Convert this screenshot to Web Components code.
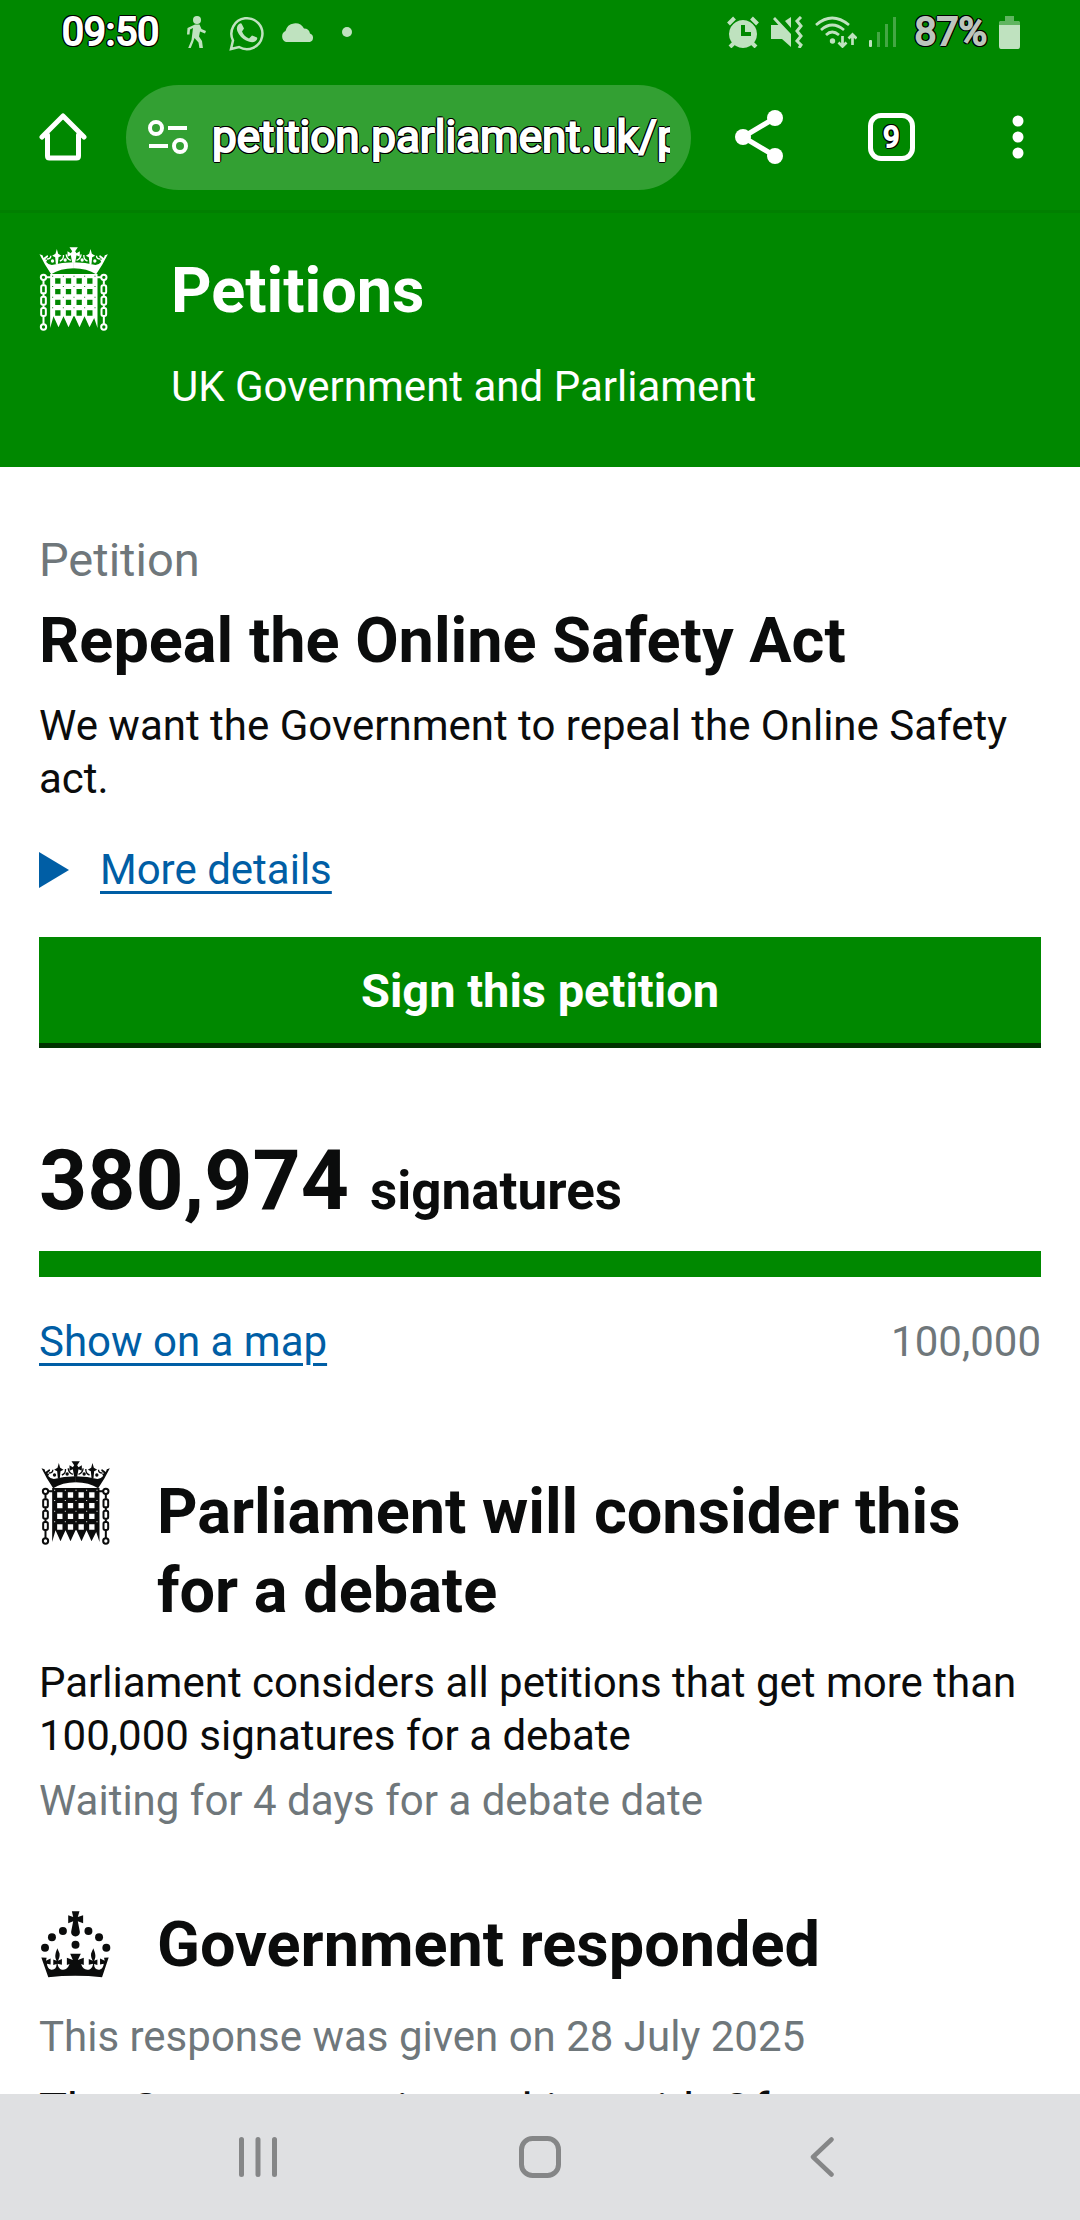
<!DOCTYPE html>
<html lang="en">
<head>
<meta charset="utf-8">
<meta name="viewport" content="width=device-width, initial-scale=1">
<title>Repeal the Online Safety Act - Petitions</title>
<style>
  html, body {
    margin: 0;
    height: 100%;
  }

  body {
    --green: #008800;
    --dark-green: #003300;
    --text: #0b0c0c;
    --grey: #6f777b;
    --link: #005ea5;
    --gutter: 39px;
    --outline: -2px 0 black, 2px 0 black, 0 -2px black, 0 2px black,
      -1px -2px black, 1px -2px black, -1px 2px black, 1px 2px black,
      -2px -1px black, 2px -1px black, -2px 1px black, 2px 1px black;

    display: flex;
    flex-direction: column;
    overflow: hidden;
    background: white;
    color: var(--text);
    font-family: Roboto, "Liberation Sans", sans-serif;
    font-size: 42px;
    line-height: 53px;
  }

  petition-page {
    flex: 1;
    min-height: 0;
  }
</style>
</head>
<body>

<status-bar time="09:50" battery="87%"></status-bar>
<browser-toolbar url="petition.parliament.uk/p" tabs="9"></browser-toolbar>

<petition-page>
  <site-header slot="header">
    Petitions
    <span slot="tagline">UK Government and Parliament</span>
  </site-header>

  <petition-summary>
    <span slot="title">Repeal the Online Safety Act</span>
    We want the Government to repeal the Online Safety act.
  </petition-summary>

  <signature-count count="380974" target="100000"></signature-count>

  <petition-section icon="portcullis">
    <span slot="title">Parliament will consider this for a debate</span>
    <section-text>Parliament considers all petitions that get more than 100,000 signatures for a debate</section-text>
    <section-text meta>Waiting for 4 days for a debate date</section-text>
  </petition-section>

  <petition-section icon="crown" loose>
    <span slot="title">Government responded</span>
    <section-text meta>This response was given on 28 July 2025</section-text>
    <section-text intro>The Government is working with Ofcom</section-text>
  </petition-section>
</petition-page>

<system-nav></system-nav>

<script>
/*
*   Icons
*/

const chain = `
  <circle cx="78" cy="153" r="8"/>
  <path d="M78 161v14M78 203v6M78 237v6M78 271v22"/>
  <rect x="71" y="177" width="14" height="24" rx="5"/>
  <rect x="71" y="211" width="14" height="24" rx="5"/>
  <rect x="71" y="245" width="14" height="24" rx="5"/>
  <circle cx="78" cy="302" r="8"/>
`;

function portcullisHoles () {
  let d = '';
  for (let y of [156, 188, 220, 252]) {
    for (let x of [113, 145, 177, 209]) {
      d += `M${x} ${y}v16h16v-16z`;
    }
  }
  for (let y of [148, 179, 211, 243]) {
    for (let x of [104, 136, 168, 200, 231]) {
      d += `M${x} ${y}v3h3v-3z`;
    }
  }
  return d;
}

const halfCrown = `
  <path d="M66 84l9 3 3 8 12-9 2 5-9 8 6 2-3 6q6 8 17 9Q132 109 169 108V126Q128 126 101 144L82 114z"/>
  <path d="M118 68l4 14 10 6-9 5-2 20h-6l-2-20-9-5 10-6z"/>
  <path fill="none" stroke="currentColor" stroke-width="4" d="M88 98q12 0 12-10M127 104q12-4 11-18M146 84q2 14 14 18"/>
  <circle cx="105" cy="104" r="5"/>
  <circle cx="143" cy="101" r="5"/>
`;

const icons = {
  portcullis: ['65 62 206 252', `
    <g>${halfCrown}</g>
    <g transform="matrix(-1 0 0 1 337 0)">${halfCrown}</g>
    <path d="M156 63h25l-8 12 4 6 10-6v16l-10-4-4 22h-9l-4-22-10 4v-16l10 6 4-6z"/>
    <path fill-rule="evenodd" d="M98 143h142v162l-10-30-14 28-15-33-15 33-15-33h-3l-15 33-15-33-15 33-15-33-10 35z${portcullisHoles()}"/>
    <g fill="none" stroke="currentColor" stroke-width="6">${chain}
      <g transform="matrix(-1 0 0 1 337 0)">${chain}</g>
      <path d="M86 153h14M237 153h14"/>
    </g>`],
  crown: ['58 58 210 202', `
    <path d="M152 59h23l-5 17 16-5v24l-16-6 6 31c1 8-5 15-13 15s-14-7-13-15l6-31-15 6V71l15 5z"/>
    <circle cx="163" cy="160" r="12"/>
    <circle cx="125" cy="118" r="12"/><circle cx="202" cy="118" r="12"/>
    <circle cx="92" cy="137" r="12"/><circle cx="234" cy="137" r="12"/>
    <circle cx="71" cy="169" r="12"/><circle cx="256" cy="169" r="12"/>
    <path d="M60 198l16 1-2 9 14-7v18l-11-2c1 12 8 18 15 18 9 0 14-6 14-17l-10 3v-17l10 4c-4-8-5-14-3-22 1-6 4-11 5-16 2 5 5 10 7 16 1 8-1 14-5 22l12-5v17l-13-3c2 13 8 18 17 18s15-6 19-17l-8 3v-22l18 7-8-19h32l-9 19 18-7v22l-8-3c3 11 10 17 19 17s15-5 17-18l-13 3v-17l12 5c-4-8-6-14-5-22 2-6 5-11 7-16 1 5 4 10 5 16 2 8 1 14-3 22l10-4v17l-10-3c0 11 5 17 14 17 7 0 14-6 15-18l-11 2v-18l14 7-2-9 14-1-20 60q-81-9-162 0z"/>`],
  walk: ['0 0 20 32', `
    <circle cx="10" cy="4" r="4"/>
    <path d="M8 8.500h4.500l2 4.500 4.500 2-1 2.500-5-2-1 5 3 4.500 1 7.500h-3.500l-1-6-4-4.500-1.500 4.500-2.500 6H1l3.500-8.500L6 12l-3 1.500-.5 5H0L.5 12z"/>`],
  whatsapp: ['0 0 35 37', `
    <path fill="none" stroke="currentColor" stroke-width="2.500" d="M2 35l2-8.500A15.500 15.500 0 1 1 10 33z"/>
    <path d="M9 11q3-3 4-.5l2 4-2 3q2 5 7 7l3-3 5 2q1 2-2 4-3 2-9-1-6-3-8.500-9Q7 14 9 11z"/>`],
  cloud: ['0 0 34 20', '<path d="M6 20a6 6 0 0 1-.5-11A10 10 0 0 1 24 6.500q5 0 6 5A4.500 4.500 0 0 1 30 20z"/>'],
  dot: ['0 0 10 10', '<circle cx="5" cy="5" r="5"/>'],
  alarm: ['0 0 32 32', `
    <path fill-rule="evenodd" d="M16 4a14 14 0 1 0 .01 0zM14 9h4v7h6v4H14z"/>
    <path fill="none" stroke="currentColor" stroke-width="4" d="M1.500 8l6-6M30.500 8l-6-6M3 31l5-5M29 31l-5-5"/>`],
  mute: ['0 0 32 32', `
    <path d="M14 5l6-4v11zM2 3l2-2 16 17v5zM0 9h10l10 9v13l-9-8H0z"/>
    <path fill="none" stroke="currentColor" stroke-width="3" d="M30 1l-4 4 4 5-4 5 4 5-4 5 4 4-2 3"/>`],
  wifi: ['0 0 42 32', `
    <g fill="none" stroke="currentColor" stroke-width="2.700">
      <path d="M1 9q16-14 33 0M6 14q11-10 23 0M11 19q6-6 13 0"/>
      <path d="M27.500 20v10M23.500 26.500l4 4 4-4M37.500 29V19M33.500 22.500l4-4 4 4"/>
    </g>
    <circle cx="17.500" cy="25" r="2.700"/>`],
  signal: ['0 0 28 32', `
    <rect x="0" y="24" width="3" height="7" rx="1"/>
    <path fill-opacity=".35" d="M8 16h3v15H8zM16 8h3v23h-3zM24 1h3v30h-3z"/>`],
  battery: ['0 0 21 33', `
    <path fill-opacity=".5" d="M6 0h9v5h5l1 1v3H0V6l1-1h5z"/>
    <path d="M0 9h21v21q0 3-2 3H2q-2 0-2-3z"/>`],
  home: ['0 0 48 48', '<path fill="none" stroke="currentColor" stroke-width="5" stroke-linejoin="round" stroke-linecap="round" d="M8.500 22v21q0 2 2 2h27q2 0 2-2V22M3 24L24 3l21 21"/>'],
  tune: ['0 0 40 34', `
    <g fill="none" stroke="currentColor" stroke-width="4">
      <circle cx="8" cy="8" r="6"/><circle cx="32" cy="26" r="6"/>
      <path d="M20 8h19M1 26h19"/>
    </g>`],
  share: ['0 0 48 54', `
    <path fill="none" stroke="currentColor" stroke-width="5" d="M40 8L8 27l32 19"/>
    <circle cx="8" cy="27" r="8"/><circle cx="40" cy="8" r="8"/><circle cx="40" cy="46" r="8"/>`],
  more: ['0 0 12 44', '<circle cx="6" cy="6" r="5.500"/><circle cx="6" cy="22" r="5.500"/><circle cx="6" cy="38" r="5.500"/>'],
  recents: ['0 0 38 40', '<path fill="none" stroke="currentColor" stroke-width="5" stroke-linecap="round" d="M2.500 2.500v35M19 2.500v35M35.500 2.500v35"/>'],
  square: ['0 0 42 42', '<rect x="2.500" y="2.500" width="37" height="37" rx="11" fill="none" stroke="currentColor" stroke-width="5"/>'],
  back: ['0 0 24 40', '<path fill="none" stroke="currentColor" stroke-width="4.500" stroke-linecap="round" stroke-linejoin="round" d="M21.500 2.500L3 20l18.500 17.500"/>'],
  triangle: ['0 0 30 36', '<path d="M0 0l30 18L0 36z"/>']
};

class UiIcon extends HTMLElement {
  connectedCallback () {
    const [viewBox, shapes] = icons[this.getAttribute('name')];
    const [, , w, h] = viewBox.split(' ');
    const width = this.getAttribute('width') || w;
    const height = this.getAttribute('height') || h;
    this.attachShadow({ mode: 'open' });
    this.shadowRoot.innerHTML = `
      <style>
        :host { display: block; flex: none; }
        svg { display: block; }
      </style>
      <svg viewBox="${viewBox}" width="${width}" height="${height}" fill="currentColor" aria-hidden="true">${shapes}</svg>
    `;
  }
}

/*
*   Device and browser bars
*/

class StatusBar extends HTMLElement {
  connectedCallback () {
    this.attachShadow({ mode: 'open' });
    this.shadowRoot.innerHTML = `
      <style>
        :host {
          display: flex;
          flex: none;
          justify-content: space-between;
          height: 64px;
          padding: 0 60px 0 62px;
          background: var(--green);
          color: #bfe2bf;
          font-size: 39px;
        }
        div { display: flex; align-items: center; gap: 12px; }
        .left { gap: 16px; }
        .left ui-icon:first-of-type { margin: 0 6px 0 12px; }
        .left ui-icon:last-of-type { margin-left: 12px; }
        span {
          -webkit-text-stroke: 2px currentColor;
          text-shadow: var(--outline);
        }
        .time { color: white; }
        .battery { color: #bcc5bc; margin-left: 6px; }
      </style>
      <div class="left">
        <span class="time">${this.getAttribute('time')}</span>
        <ui-icon name="walk"></ui-icon>
        <ui-icon name="whatsapp"></ui-icon>
        <ui-icon name="cloud"></ui-icon>
        <ui-icon name="dot"></ui-icon>
      </div>
      <div>
        <ui-icon name="alarm"></ui-icon>
        <ui-icon name="mute"></ui-icon>
        <ui-icon name="wifi"></ui-icon>
        <ui-icon name="signal"></ui-icon>
        <span class="battery">${this.getAttribute('battery')}</span>
        <ui-icon name="battery"></ui-icon>
      </div>
    `;
  }
}

class BrowserToolbar extends HTMLElement {
  connectedCallback () {
    this.attachShadow({ mode: 'open' });
    this.shadowRoot.innerHTML = `
      <style>
        :host {
          display: flex;
          flex: none;
          align-items: center;
          height: 146px;
          padding: 0 56px 0 39px;
          border-bottom: 3px solid #017f01;
          background: var(--green);
          color: white;
        }
        button {
          flex: none;
          padding: 0;
          border: 0;
          background: none;
          color: inherit;
          font: inherit;
        }
        label {
          display: flex;
          flex: 1;
          align-items: center;
          gap: 24px;
          min-width: 0;
          height: 105px;
          box-sizing: border-box;
          margin: 0 44px 0 39px;
          padding: 0 21px 0 22px;
          border-radius: 53px;
          background: #33a033;
        }
        input {
          flex: 1;
          min-width: 0;
          height: 60px;
          padding: 0;
          border: 0;
          background: none;
          color: inherit;
          font: inherit;
          font-size: 44px;
        }
        input, .tabs {
          -webkit-text-stroke: 2px currentColor;
          text-shadow: var(--outline);
        }
        .tabs {
          width: 47px;
          height: 48px;
          margin: 0 97px 0 85px;
          border: 5px solid white;
          border-radius: 13px;
          font-size: 29px;
          line-height: 38px;
        }
      </style>
      <button aria-label="Home"><ui-icon name="home"></ui-icon></button>
      <label>
        <ui-icon name="tune"></ui-icon>
        <input type="text" aria-label="Address" value="${this.getAttribute('url')}">
      </label>
      <button aria-label="Share"><ui-icon name="share"></ui-icon></button>
      <button class="tabs">${this.getAttribute('tabs')}</button>
      <button aria-label="More options"><ui-icon name="more"></ui-icon></button>
    `;
  }
}

class SystemNav extends HTMLElement {
  connectedCallback () {
    this.attachShadow({ mode: 'open' });
    this.shadowRoot.innerHTML = `
      <style>
        :host {
          display: grid;
          flex: none;
          grid-template-columns: repeat(3, 1fr);
          height: 126px;
          padding: 0 117px;
          background: #dfe0e2;
          color: #858687;
        }
        button {
          display: flex;
          align-items: center;
          justify-content: center;
          padding: 0;
          border: 0;
          background: none;
          color: inherit;
        }
      </style>
      <button aria-label="Recent apps"><ui-icon name="recents"></ui-icon></button>
      <button aria-label="Home"><ui-icon name="square"></ui-icon></button>
      <button aria-label="Back"><ui-icon name="back"></ui-icon></button>
    `;
  }
}

/*
*   Petition page
*/

class PetitionPage extends HTMLElement {
  connectedCallback () {
    this.attachShadow({ mode: 'open' });
    this.shadowRoot.innerHTML = `
      <style>
        :host { display: block; overflow: hidden; }
        main { padding: 63px var(--gutter) 0; }
      </style>
      <slot name="header"></slot>
      <main><slot></slot></main>
    `;
  }
}

class SiteHeader extends HTMLElement {
  connectedCallback () {
    this.attachShadow({ mode: 'open' });
    this.shadowRoot.innerHTML = `
      <style>
        :host {
          display: block;
          background: var(--green);
          color: white;
        }
        header {
          display: flex;
          align-items: flex-start;
          gap: 63px;
          padding: 34px var(--gutter) 54px;
        }
        .titles { padding-top: 4px; }
        a {
          display: block;
          margin-bottom: 30px;
          color: inherit;
          font-size: 63px;
          font-weight: 700;
          line-height: 79px;
          text-decoration: none;
        }
      </style>
      <header>
        <ui-icon name="portcullis" width="69" height="84"></ui-icon>
        <div class="titles">
          <a href="#"><slot></slot></a>
          <slot name="tagline"></slot>
        </div>
      </header>
    `;
  }
}

class PetitionSummary extends HTMLElement {
  connectedCallback () {
    this.attachShadow({ mode: 'open' });
    this.shadowRoot.innerHTML = `
      <style>
        :host { display: block; }
        .kind {
          margin: 0 0 11px;
          color: var(--grey);
          font-size: 47px;
          line-height: 60px;
        }
        h1 {
          margin: 0 0 19px;
          font-size: 63px;
          line-height: 79px;
        }
        p { margin: 0 0 38px; }
        summary {
          display: flex;
          align-items: center;
          gap: 31px;
          margin-bottom: 41px;
          color: var(--link);
          list-style: none;
        }
        summary span {
          text-decoration: underline;
          text-decoration-thickness: 3px;
          text-underline-offset: 7px;
        }
        button {
          width: 100%;
          height: 111px;
          padding: 0;
          border: 0;
          border-bottom: 5px solid var(--dark-green);
          background: var(--green);
          color: white;
          font: inherit;
          font-size: 47px;
          font-weight: 700;
        }
      </style>
      <p class="kind">Petition</p>
      <h1><slot name="title"></slot></h1>
      <p><slot></slot></p>
      <details>
        <summary><ui-icon name="triangle"></ui-icon><span>More details</span></summary>
      </details>
      <button>Sign this petition</button>
    `;
  }
}

class SignatureCount extends HTMLElement {
  connectedCallback () {
    const count = Number(this.getAttribute('count'));
    const target = Number(this.getAttribute('target'));
    this.attachShadow({ mode: 'open' });
    this.shadowRoot.innerHTML = `
      <style>
        :host { display: block; margin: 83px 0 93px; }
        p {
          margin: 0 0 20px;
          font-size: 53px;
          font-weight: 700;
          line-height: 60px;
        }
        .count {
          margin-right: 8px;
          font-size: 84px;
          line-height: 100px;
        }
        progress {
          display: block;
          width: 100%;
          height: 26px;
          margin-bottom: 38px;
          border: 0;
          appearance: none;
        }
        progress::-webkit-progress-bar { background: #dee0e2; }
        progress::-webkit-progress-value { background: var(--green); }
        .row { display: flex; justify-content: space-between; }
        a {
          color: var(--link);
          text-decoration-thickness: 3px;
          text-underline-offset: 7px;
        }
        .target { color: var(--grey); }
      </style>
      <p><span class="count">${count.toLocaleString('en-GB')}</span> signatures</p>
      <progress max="${target}" value="${Math.min(count, target)}" aria-label="Signatures"></progress>
      <div class="row">
        <a href="#">Show on a map</a>
        <span class="target">${target.toLocaleString('en-GB')}</span>
      </div>
    `;
  }
}

class PetitionSection extends HTMLElement {
  connectedCallback () {
    const icon = this.getAttribute('icon');
    const size = icon === 'crown' ? [71, 67] : [69, 84];
    this.attachShadow({ mode: 'open' });
    this.shadowRoot.innerHTML = `
      <style>
        :host { display: block; margin-bottom: 78px; }
        .heading {
          display: grid;
          grid-template-columns: 73px 1fr;
          column-gap: 45px;
          justify-items: start;
          margin-bottom: 26px;
        }
        ui-icon { justify-self: center; }
        h2 {
          margin: 11px 0 0;
          font-size: 63px;
          line-height: 79px;
        }
        :host([loose]) .heading { align-items: center; }
        :host([loose]) h2 { margin: 0; }
        .body { display: flex; flex-direction: column; gap: 12px; }
        :host([loose]) .body { gap: 17px; }
      </style>
      <div class="heading">
        <ui-icon name="${icon}" width="${size[0]}" height="${size[1]}"></ui-icon>
        <h2><slot name="title"></slot></h2>
      </div>
      <div class="body"><slot></slot></div>
    `;
  }
}

class SectionText extends HTMLElement {
  connectedCallback () {
    this.attachShadow({ mode: 'open' });
    this.shadowRoot.innerHTML = `
      <style>
        :host { display: block; }
        :host([meta]) { color: var(--grey); }
        :host([intro]) { font-size: 47px; line-height: 60px; }
        p { margin: 0; }
      </style>
      <p><slot></slot></p>
    `;
  }
}

customElements.define('ui-icon', UiIcon);
customElements.define('status-bar', StatusBar);
customElements.define('browser-toolbar', BrowserToolbar);
customElements.define('system-nav', SystemNav);
customElements.define('petition-page', PetitionPage);
customElements.define('site-header', SiteHeader);
customElements.define('petition-summary', PetitionSummary);
customElements.define('signature-count', SignatureCount);
customElements.define('petition-section', PetitionSection);
customElements.define('section-text', SectionText);
</script>
</body>
</html>
